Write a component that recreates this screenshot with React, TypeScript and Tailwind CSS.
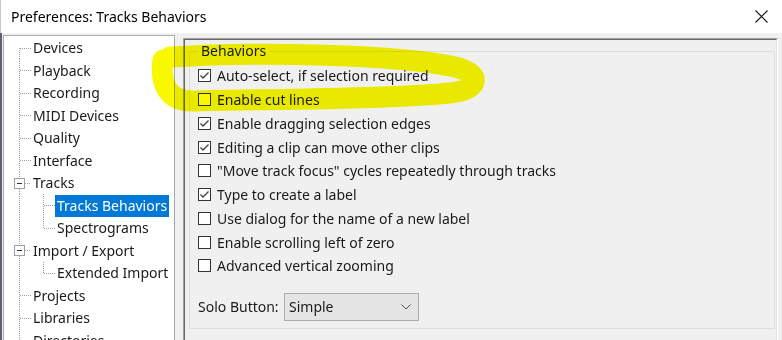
import type { ReactNode } from "react";

type TreeItem = {
  label: string;
  level: 0 | 1;
  expander?: boolean;
  first?: boolean;
  lastChild?: boolean;
  selected?: boolean;
};

const TREE: TreeItem[] = [
  { label: "Devices", level: 0, first: true },
  { label: "Playback", level: 0 },
  { label: "Recording", level: 0 },
  { label: "MIDI Devices", level: 0 },
  { label: "Quality", level: 0 },
  { label: "Interface", level: 0 },
  { label: "Tracks", level: 0, expander: true },
  { label: "Tracks Behaviors", level: 1, selected: true },
  { label: "Spectrograms", level: 1, lastChild: true },
  { label: "Import / Export", level: 0, expander: true },
  { label: "Extended Import", level: 1, lastChild: true },
  { label: "Projects", level: 0 },
  { label: "Libraries", level: 0 },
  { label: "Directories", level: 0 },
];

const BEHAVIORS: { label: string; checked: boolean }[] = [
  { label: "Auto-select, if selection required", checked: true },
  { label: "Enable cut lines", checked: false },
  { label: "Enable dragging selection edges", checked: true },
  { label: "Editing a clip can move other clips", checked: true },
  { label: "\"Move track focus\" cycles repeatedly through tracks", checked: false },
  { label: "Type to create a label", checked: true },
  { label: "Use dialog for the name of a new label", checked: false },
  { label: "Enable scrolling left of zero", checked: false },
  { label: "Advanced vertical zooming", checked: false },
];

const DOT = { stroke: "#a0a0a0", strokeWidth: 1, strokeDasharray: "1 1" };

function RootGutter({ item }: { item: TreeItem }) {
  const h = 22.5;
  const isRootRow = item.level === 0;
  return (
    <svg width="27" height={h} className="shrink-0">
      {isRootRow && item.expander ? (
        <>
          <line x1="15.5" y1="0" x2="15.5" y2="5.5" {...DOT} />
          <line x1="15.5" y1="17" x2="15.5" y2={h} {...DOT} />
          <rect x="10.5" y="6.5" width="10" height="10" fill="#fdfdfd" stroke="#a0a0a0" />
          <line x1="13" y1="11.5" x2="18" y2="11.5" stroke="#333" />
          <line x1="21" y1="11.5" x2="27" y2="11.5" {...DOT} />
        </>
      ) : (
        <>
          <line x1="15.5" y1={item.first ? 11 : 0} x2="15.5" y2={h} {...DOT} />
          {isRootRow && <line x1="16" y1="11.5" x2="27" y2="11.5" {...DOT} />}
        </>
      )}
    </svg>
  );
}

function ChildGutter({ item }: { item: TreeItem }) {
  return (
    <svg width="24" height="22.5" className="shrink-0">
      <line x1="12.5" y1="0" x2="12.5" y2={item.lastChild ? 11.5 : 22.5} {...DOT} />
      <line x1="13" y1="11.5" x2="24" y2="11.5" {...DOT} />
    </svg>
  );
}

function TreeRow({ item }: { item: TreeItem }) {
  return (
    <div className="flex h-[22.5px] items-center">
      <RootGutter item={item} />
      {item.level === 1 && <ChildGutter item={item} />}
      <span
        className={
          item.selected
            ? "flex h-[22px] items-center whitespace-nowrap bg-[#0078d7] px-[2px] text-white"
            : "flex h-[22px] items-center whitespace-nowrap px-[2px] text-[#1a1a1a]"
        }
      >
        {item.label}
      </span>
    </div>
  );
}

function CheckBox({ checked }: { checked: boolean }) {
  return (
    <span className="flex h-[13px] w-[13px] shrink-0 items-center justify-center border border-[#333] bg-white">
      {checked && (
        <svg width="11" height="11" viewBox="0 0 11 11">
          <polyline points="1.5,5.5 4,8 9.5,2.5" fill="none" stroke="#3c3c3c" strokeWidth="1.3" />
        </svg>
      )}
    </span>
  );
}

function Row({ children }: { children: ReactNode }) {
  return <div className="flex h-[23.75px] items-center gap-[6px] whitespace-nowrap">{children}</div>;
}

export default function App() {
  return (
    <div className="relative h-[340px] w-[782px] overflow-hidden bg-[#f0f0f0] font-['Noto_Sans',sans-serif] text-[14px] text-[#1a1a1a]">
      <div className="flex h-[33px] items-center justify-between border-l border-[#c8c8c8] bg-white pl-[10px] pr-[14px]">
        <span className="text-black">Preferences: Tracks Behaviors</span>
        <svg width="13" height="13" viewBox="0 0 13 13">
          <path d="M0.5 0.5 L12.5 12.5 M12.5 0.5 L0.5 12.5" stroke="#111" strokeWidth="1.1" />
        </svg>
      </div>

      <div className="flex h-[307px] items-start border-l-2 border-[#5f6070]">
        <div className="ml-[1px] mt-[2px] h-[320px] w-[172px] border border-[#a8a8a8] bg-white pl-0 pt-[0.75px] leading-none">
          {TREE.map((item) => (
            <TreeRow key={item.label} item={item} />
          ))}
        </div>

        <div className="ml-[8px] mt-[5px] h-[320px] w-[595px] border-l border-t border-b border-r border-[#a0a0a0] border-b-white border-r-white">
          <div className="h-full border-l border-t border-r border-[#696969] border-r-[#e3e3e3]">
            <fieldset className="ml-[4px] mr-[1px] mt-[1px] border border-[#dcdcdc] pb-[7px] pl-2">
              <legend className="px-[3px] leading-[20px]">Behaviors</legend>
              <div className="mt-[3px]">
                {BEHAVIORS.map((b) => (
                  <Row key={b.label}>
                    <CheckBox checked={b.checked} />
                    <span>{b.label}</span>
                  </Row>
                ))}
              </div>
              <div className="mt-[15px] flex items-center">
                <span className="w-[86px] whitespace-nowrap">Solo Button:</span>
                <div className="flex h-[28px] w-[135px] items-center justify-between border border-[#adadad] bg-[#e5e5e5] pl-[4px] pr-[7px]">
                  <span>Simple</span>
                  <svg width="10" height="6" viewBox="0 0 10 6">
                    <polyline points="0.5,0.5 5,5 9.5,0.5" fill="none" stroke="#555" strokeWidth="1" />
                  </svg>
                </div>
              </div>
            </fieldset>
          </div>
        </div>
      </div>

      <svg
        width="782"
        height="340"
        className="pointer-events-none absolute left-0 top-0 mix-blend-multiply"
      >
        <path
          d="M170 57 C260 51, 400 55, 455 67 C482 73, 481 90, 450 93 C380 100, 260 99, 195 101 C166 102, 160 82, 163 60"
          fill="none"
          stroke="#f8f800"
          strokeWidth="21"
          strokeLinecap="round"
          strokeLinejoin="round"
        />
      </svg>
    </div>
  );
}
